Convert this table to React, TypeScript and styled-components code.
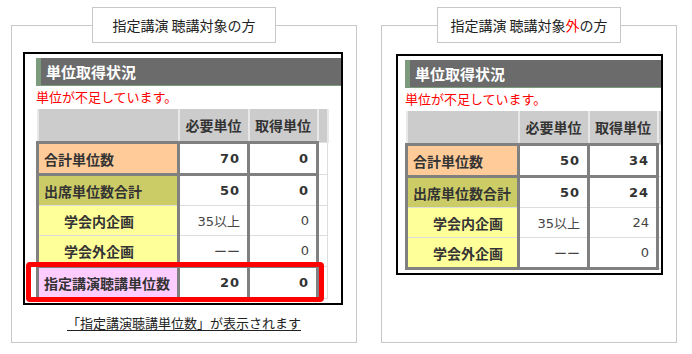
import React from "react";
import styled, { createGlobalStyle } from "styled-components";

interface UnitRow {
  label: string;
  bg: string;
  req: string;
  got: string;
  sub?: boolean;
}

interface PanelProps {
  title: React.ReactNode;
  groups: UnitRow[][];
  firstCol: number;
  lastCol: number;
  frameWidth: number;
  frameLeft: number;
  frameTop: number;
  innerLeft: number;
  highlight?: boolean;
  caption?: string;
  width: number;
}

const leftGroups: UnitRow[][] = [
  [{ label: "合計単位数", bg: "#ffcc99", req: "70", got: "0" }],
  [
    { label: "出席単位数合計", bg: "#cccc66", req: "50", got: "0" },
    { label: "学会内企画", bg: "#ffff99", req: "35以上", got: "0", sub: true },
    { label: "学会外企画", bg: "#ffff99", req: "ーー", got: "0", sub: true },
  ],
  [{ label: "指定講演聴講単位数", bg: "#ffccff", req: "20", got: "0" }],
];

const rightGroups: UnitRow[][] = [
  [{ label: "合計単位数", bg: "#ffcc99", req: "50", got: "34" }],
  [
    { label: "出席単位数合計", bg: "#cccc66", req: "50", got: "24" },
    { label: "学会内企画", bg: "#ffff99", req: "35以上", got: "24", sub: true },
    { label: "学会外企画", bg: "#ffff99", req: "ーー", got: "0", sub: true },
  ],
];

const Panel = ({
  title,
  groups,
  firstCol,
  lastCol,
  frameWidth,
  frameLeft,
  frameTop,
  innerLeft,
  highlight,
  caption,
  width,
}: PanelProps) => {
  return (
    <Box $w={width}>
      <Legend>{title}</Legend>
      <Frame $w={frameWidth} $ml={frameLeft} $mt={frameTop} $pl={innerLeft}>
        <Bar>単位取得状況</Bar>
        <Notice>単位が不足しています。</Notice>
        <Table $w={firstCol + 139 + lastCol}>
          <colgroup>
            <col style={{ width: firstCol }} />
            <col style={{ width: 70 }} />
            <col style={{ width: 69 }} />
            <col style={{ width: lastCol }} />
          </colgroup>
          <thead>
            <tr>
              <HeadCell />
              <HeadCell>必要単位</HeadCell>
              <HeadCell>取得単位</HeadCell>
              <HeadCell />
            </tr>
          </thead>
          <tbody>
            {groups.map((group, gi) =>
              group.map((row, ri) => {
                const first = ri === 0;
                const last = ri === group.length - 1;
                return (
                  <tr key={`${gi}-${ri}`}>
                    <LabelCell $bg={row.bg} $sub={row.sub} $top={first} $bottom={last}>
                      {row.label}
                    </LabelCell>
                    <ValueCell $sub={row.sub} $top={first} $bottom={last}>
                      {row.req}
                    </ValueCell>
                    <ValueCell $sub={row.sub} $top={first} $bottom={last}>
                      {row.got}
                    </ValueCell>
                    <EdgeCell />
                  </tr>
                );
              })
            )}
          </tbody>
        </Table>
        {highlight && <Highlight />}
      </Frame>
      {caption && <Caption>{caption}</Caption>}
    </Box>
  );
};

const App = () => {
  return (
    <>
      <GlobalStyle />
      <Page>
        <Panel
          width={346}
          title="指定講演 聴講対象の方"
          groups={leftGroups}
          firstCol={141}
          lastCol={10}
          frameWidth={320}
          frameLeft={11}
          frameTop={9}
          innerLeft={11}
          highlight
          caption="「指定講演聴講単位数」が表示されます"
        />
        <Panel
          width={296}
          title={
            <>
              指定講演 聴講対象<Red>外</Red>の方
            </>
          }
          groups={rightGroups}
          firstCol={112}
          lastCol={20}
          frameWidth={267}
          frameLeft={14}
          frameTop={11}
          innerLeft={7}
        />
      </Page>
    </>
  );
};

export default App;

const GlobalStyle = createGlobalStyle`
  body {
    margin: 0;
    background: #fff;
    font-family: "Noto Sans CJK JP", "Noto Sans", sans-serif;
    color: #222;
  }
`;

const Page = styled.div`
  display: flex;
  align-items: flex-start;
  gap: 24px;
  padding: 25px 0 0 11px;
  width: 692px;
  height: 354px;
  box-sizing: border-box;
`;

const Box = styled.div<{ $w: number }>`
  width: ${(p) => p.$w}px;
  height: 318px;
  box-sizing: border-box;
  border: 1px solid #c8c8c8;
  display: flex;
  flex-direction: column;
  align-items: center;
`;

const Legend = styled.div`
  margin-top: -19px;
  width: 184px;
  height: 36px;
  box-sizing: border-box;
  border: 1px solid #c8c8c8;
  background: #fff;
  display: flex;
  align-items: center;
  justify-content: center;
  font-size: 14px;
  color: #222;
  white-space: nowrap;
`;

const Red = styled.span`
  color: #ff0000;
`;

const Frame = styled.div<{ $w: number; $ml: number; $mt: number; $pl: number }>`
  position: relative;
  align-self: flex-start;
  width: ${(p) => p.$w}px;
  margin: ${(p) => p.$mt}px 0 0 ${(p) => p.$ml}px;
  padding: 4px 0 3px ${(p) => p.$pl}px;
  box-sizing: border-box;
  border: 2px solid #000;
  overflow: hidden;
`;

const Bar = styled.div`
  width: 420px;
  height: 28px;
  box-sizing: border-box;
  background: #6b6b6b;
  border-left: 5px solid #7c9a7c;
  border-bottom: 1px solid #7c9a7c;
  padding-left: 5px;
  display: flex;
  align-items: center;
  color: #fff;
  font-size: 15px;
  font-weight: 700;
`;

const Notice = styled.div`
  height: 23px;
  line-height: 22px;
  font-size: 13px;
  color: #ff0000;
  white-space: nowrap;
`;

const Table = styled.table<{ $w: number }>`
  width: ${(p) => p.$w}px;
  table-layout: fixed;
  border-collapse: collapse;
  color: #333;
`;

const HeadCell = styled.th`
  height: 32px;
  padding: 0;
  background: #cccccc;
  border-left: 2px solid #e8e8e8;
  border-right: 2px solid #e8e8e8;
  font-size: 14px;
  font-weight: 700;
  text-align: center;
  white-space: nowrap;
  overflow: hidden;
`;

const BodyCell = styled.td<{ $top?: boolean; $bottom?: boolean }>`
  height: 29px;
  padding: 0;
  border-left: 3px solid #808080;
  border-right: 3px solid #808080;
  border-top: ${(p) => (p.$top ? "3px solid #808080" : "1px solid #dddddd")};
  border-bottom: ${(p) => (p.$bottom ? "3px solid #808080" : "1px solid #dddddd")};
  white-space: nowrap;
`;

const LabelCell = styled(BodyCell)<{ $bg: string; $sub?: boolean }>`
  background: ${(p) => p.$bg};
  padding-left: ${(p) => (p.$sub ? 25 : 5)}px;
  font-size: 14px;
  font-weight: 700;
`;

const ValueCell = styled(BodyCell)<{ $sub?: boolean }>`
  background: #fff;
  text-align: right;
  padding-right: 7px;
  font-family: "DejaVu Sans", "Noto Sans CJK JP", sans-serif;
  font-size: 13px;
  font-weight: ${(p) => (p.$sub ? 400 : 700)};
  letter-spacing: ${(p) => (p.$sub ? 0 : 1)}px;
  color: ${(p) => (p.$sub ? "#444" : "#333")};
`;

const EdgeCell = styled.td`
  padding: 0;
  background: #fff;
  border: 1px solid #dddddd;
`;

const Highlight = styled.div`
  position: absolute;
  left: 1px;
  top: 208px;
  width: 298px;
  height: 40px;
  box-sizing: border-box;
  border: 5px solid #ff0000;
  border-radius: 4px;
`;

const Caption = styled.div`
  margin-top: 9px;
  font-size: 13px;
  line-height: 18px;
  color: #222;
  text-decoration: underline;
  text-underline-offset: 2px;
  white-space: nowrap;
`;
